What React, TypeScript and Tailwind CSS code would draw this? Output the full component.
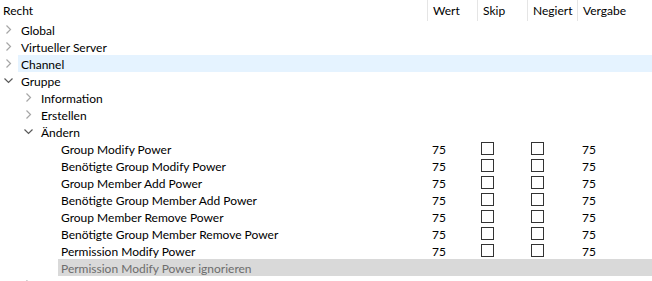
import { useState } from 'react';

type Row = {
  label: string;
  level: number;
  toggle?: 'open' | 'closed';
  values?: boolean;
  tone?: 'hover' | 'disabled';
};

const rows: Row[] = [
  { label: 'Global', level: 0, toggle: 'closed' },
  { label: 'Virtueller Server', level: 0, toggle: 'closed' },
  { label: 'Channel', level: 0, toggle: 'closed', tone: 'hover' },
  { label: 'Gruppe', level: 0, toggle: 'open' },
  { label: 'Information', level: 1, toggle: 'closed' },
  { label: 'Erstellen', level: 1, toggle: 'closed' },
  { label: 'Ändern', level: 1, toggle: 'open' },
  { label: 'Group Modify Power', level: 2, values: true },
  { label: 'Benötigte Group Modify Power', level: 2, values: true },
  { label: 'Group Member Add Power', level: 2, values: true },
  { label: 'Benötigte Group Member Add Power', level: 2, values: true },
  { label: 'Group Member Remove Power', level: 2, values: true },
  { label: 'Benötigte Group Member Remove Power', level: 2, values: true },
  { label: 'Permission Modify Power', level: 2, values: true },
  { label: 'Permission Modify Power ignorieren', level: 2, tone: 'disabled' },
  { label: 'Löschen', level: 1, toggle: 'closed' },
];

function Chevron({ open }: { open: boolean }) {
  return open ? (
    <svg width="18" height="17" viewBox="0 0 18 17">
      <path d="M4.5 6.5 L8.5 10.5 L12.5 6.5" fill="none" stroke="#5a5a5a" strokeWidth="1.2" />
    </svg>
  ) : (
    <svg width="18" height="17" viewBox="0 0 18 17">
      <path d="M6.5 4.5 L10.5 8.5 L6.5 12.5" fill="none" stroke="#a6a6a6" strokeWidth="1.2" />
    </svg>
  );
}

function Box() {
  return <div className="w-[13px] h-[13px] border border-[#333333] bg-white" />;
}

export default function App() {
  const [hovered] = useState('Channel');

  return (
    <div
      className="w-[652px] h-[281px] overflow-hidden bg-white text-[12px] text-black"
      style={{ fontFamily: 'Lato, "Noto Sans", sans-serif' }}
    >
      {/* Column header */}
      <div className="flex h-[21px] items-center leading-none">
        <div className="w-[427px] pl-[3px]">Recht</div>
        <div className="w-[50px] h-full flex items-center pl-[5px] border-l border-[#e5e5e5]">Wert</div>
        <div className="w-[50px] h-full flex items-center pl-[5px] border-l border-[#e5e5e5]">Skip</div>
        <div className="w-[50px] h-full flex items-center pl-[5px] border-l border-[#e5e5e5]">Negiert</div>
        <div className="flex-1 h-full flex items-center pl-[5px] border-l border-[#e5e5e5]">Vergabe</div>
      </div>

      {/* Tree rows */}
      {rows.map((row) => {
        const bg =
          row.tone === 'disabled'
            ? 'bg-[#d9d9d9] text-[#6d6d6d]'
            : row.label === hovered
              ? 'bg-[#e5f3ff]'
              : '';
        return (
          <div key={row.label} className="flex h-[17px] items-center leading-none">
            <div className="shrink-0" style={{ width: row.level * 20 }} />
            <div className="w-[18px] shrink-0">
              {row.toggle && <Chevron open={row.toggle === 'open'} />}
            </div>
            <div className={`flex flex-1 h-full items-center ${bg}`}>
              <div className="flex-1 pl-[3px] pt-[2px] whitespace-nowrap">{row.label}</div>
              {row.values && (
                <div className="flex items-center">
                  <div className="w-[50px] pl-[5px] pt-[2px]">75</div>
                  <div className="w-[50px] pl-[4px]"><Box /></div>
                  <div className="w-[50px] pl-[4px]"><Box /></div>
                  <div className="w-[75px] pl-[5px] pt-[2px]">75</div>
                </div>
              )}
            </div>
          </div>
        );
      })}
    </div>
  );
}
